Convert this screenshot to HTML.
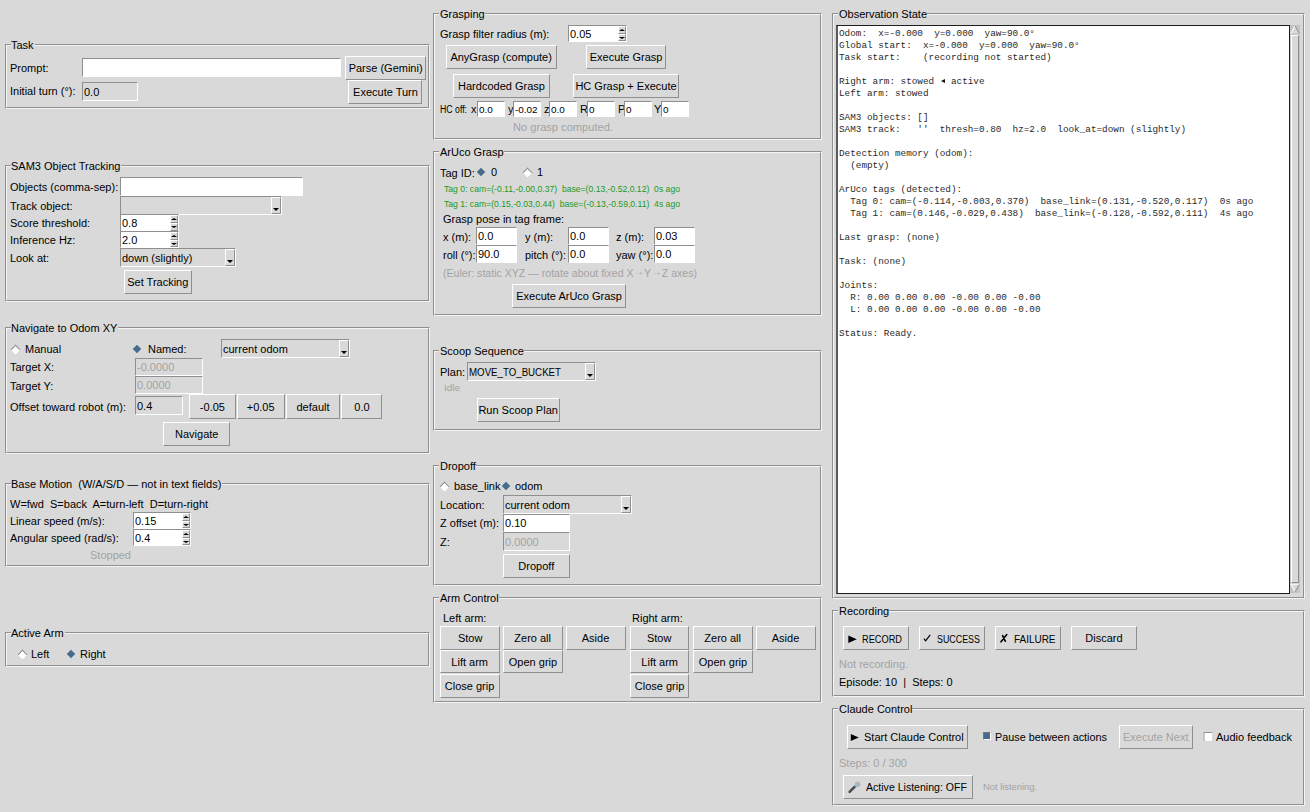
<!DOCTYPE html><html><head><meta charset="utf-8"><style>
*{margin:0;padding:0;box-sizing:content-box}
html,body{width:1310px;height:812px;overflow:hidden;background:#d9d9d9}
body{position:relative;font-family:"Liberation Sans",sans-serif;font-size:10px;color:#000}
div{position:absolute}
.t{white-space:pre;line-height:14px;height:14px;font-size:10px;transform-origin:0 0;transform:scaleX(1.1)}
.lf{border:1px solid;border-color:#8f8f8f #f4f4f4 #f4f4f4 #8f8f8f}
.lfi{left:0;top:0;border:1px solid;border-color:#f4f4f4 #8f8f8f #8f8f8f #f4f4f4}
.lft{background:#d9d9d9;height:14px}
.en{border:1px solid;border-color:#8f8f8f #fff #fff #8f8f8f}
.bt{border:1px solid;border-color:#fff #8f8f8f #8f8f8f #fff;background:#d9d9d9}
.bl{width:200px;text-align:center;white-space:pre;line-height:14px;height:14px}
.bl span{display:inline-block;transform-origin:50% 50%}
.sb{border:1px solid;border-color:#fff #8f8f8f #8f8f8f #fff;background:#d9d9d9}
.cb{border:1px solid;border-color:#fff #8f8f8f #8f8f8f #fff;background:#d9d9d9}
.au{width:0;height:0;border-left:3px solid transparent;border-right:3px solid transparent;border-bottom:2px solid #000}
.ad{width:0;height:0;border-left:3px solid transparent;border-right:3px solid transparent;border-top:2px solid #000}
.cad{width:0;height:0;border-left:3px solid transparent;border-right:3px solid transparent;border-top:3px solid #000}
.ru{width:6px;height:6px;background:#fff;transform:rotate(45deg);border-top:1px solid #888;border-left:1px solid #888}
.rs{width:6px;height:6px;background:#476b8b;transform:rotate(45deg)}
.g{color:#a3a3a3}
.sm{font-size:9px}
.grn{color:#229922;font-size:9.5px}
.mono{font-family:"Liberation Mono",monospace;font-size:9.33px;line-height:12px;white-space:pre;color:#2a2a2a}
.tri{display:inline-block;width:0;height:0;border-top:2px solid transparent;border-bottom:2px solid transparent;border-right:4px solid #111;margin:0 0.8px 0 0.8px;vertical-align:1px}
.arr{position:relative;top:-2px}
</style></head><body><div class="lf" style="left:5px;top:44px;width:423px;height:63px"><div class="lfi" style="width:421px;height:61px"></div></div>
<div class="lft" style="left:11px;top:37px;width:23.6px"></div>
<div class="t" style="left:11px;top:38.5px;transform:scaleX(1.1)">Task</div>
<div class="t " style="left:10px;top:62px;">Prompt:</div>
<div class="en" style="left:82px;top:58px;width:257px;height:17px;background:#fff"></div>
<div class="bt" style="left:345px;top:56px;width:79px;height:22px"></div>
<div class="bl " style="left:285.5px;top:62.0px;color:#000"><span style="transform:scaleX(1.1)">Parse (Gemini)</span></div>
<div class="t " style="left:10px;top:85px;">Initial turn (°):</div>
<div class="en" style="left:82px;top:82px;width:54px;height:17px;background:#d9d9d9"></div>
<div class="t " style="left:84px;top:85.5px;color:#000">0.0</div>
<div class="bt" style="left:348px;top:80px;width:72px;height:22px"></div>
<div class="bl " style="left:285.0px;top:86.0px;color:#000"><span style="transform:scaleX(1.1)">Execute Turn</span></div>
<div class="lf" style="left:5px;top:165px;width:423px;height:135px"><div class="lfi" style="width:421px;height:133px"></div></div>
<div class="lft" style="left:11px;top:158px;width:110.4px"></div>
<div class="t" style="left:11px;top:159.5px;transform:scaleX(1.1)">SAM3 Object Tracking</div>
<div class="t " style="left:10px;top:181px;">Objects (comma-sep):</div>
<div class="en" style="left:120px;top:177px;width:181px;height:17px;background:#fff"></div>
<div class="t " style="left:10px;top:200px;">Track object:</div>
<div class="en" style="left:120px;top:196px;width:160px;height:17px;background:#d9d9d9"></div>
<div class="cb" style="left:271px;top:197px;width:8px;height:15px"></div>
<div class="cad" style="left:273px;top:208px"></div>
<div class="t " style="left:10px;top:217px;">Score threshold:</div>
<div class="en" style="left:120px;top:214px;width:57px;height:16px;background:#fff"></div>
<div class="t " style="left:122px;top:217.0px;color:#000">0.8</div>
<div class="sb" style="left:170px;top:215px;width:6px;height:6px"></div>
<div class="sb" style="left:170px;top:223px;width:6px;height:6px"></div>
<div class="au" style="left:171px;top:218px"></div>
<div class="ad" style="left:171px;top:226px"></div>
<div class="t " style="left:10px;top:234px;">Inference Hz:</div>
<div class="en" style="left:120px;top:231px;width:57px;height:15px;background:#fff"></div>
<div class="t " style="left:122px;top:233.5px;color:#000">2.0</div>
<div class="sb" style="left:170px;top:232px;width:6px;height:6px"></div>
<div class="sb" style="left:170px;top:240px;width:6px;height:5px"></div>
<div class="au" style="left:171px;top:235px"></div>
<div class="ad" style="left:171px;top:243px"></div>
<div class="t " style="left:10px;top:252px;">Look at:</div>
<div class="en" style="left:120px;top:248px;width:114px;height:17px;background:#d9d9d9"></div>
<div class="t" style="left:122px;top:251.5px;transform:scaleX(1.1)">down (slightly)</div>
<div class="cb" style="left:225px;top:249px;width:8px;height:15px"></div>
<div class="cad" style="left:227px;top:260px"></div>
<div class="bt" style="left:124px;top:270px;width:66px;height:22px"></div>
<div class="bl " style="left:58.0px;top:276.0px;color:#000"><span style="transform:scaleX(1.1)">Set Tracking</span></div>
<div class="lf" style="left:5px;top:327px;width:423px;height:125px"><div class="lfi" style="width:421px;height:123px"></div></div>
<div class="lft" style="left:11px;top:320px;width:107.4px"></div>
<div class="t" style="left:11px;top:321.5px;transform:scaleX(1.1)">Navigate to Odom XY</div>
<div class="ru" style="left:12px;top:346px"></div>
<div class="t " style="left:25px;top:343px;">Manual</div>
<div class="rs" style="left:134px;top:346px"></div>
<div class="t " style="left:148px;top:343px;">Named:</div>
<div class="en" style="left:221px;top:339px;width:127px;height:17px;background:#d9d9d9"></div>
<div class="t" style="left:223px;top:342.5px;transform:scaleX(1.1)">current odom</div>
<div class="cb" style="left:339px;top:340px;width:8px;height:15px"></div>
<div class="cad" style="left:341px;top:351px"></div>
<div class="t " style="left:10px;top:361px;">Target X:</div>
<div class="en" style="left:135px;top:358px;width:66px;height:16px;background:#d9d9d9"></div>
<div class="t " style="left:137px;top:361.0px;color:#a3a3a3">-0.0000</div>
<div class="t " style="left:10px;top:380px;">Target Y:</div>
<div class="en" style="left:135px;top:376px;width:66px;height:16px;background:#d9d9d9"></div>
<div class="t " style="left:137px;top:379.0px;color:#a3a3a3">0.0000</div>
<div class="t " style="left:10px;top:401px;">Offset toward robot (m):</div>
<div class="en" style="left:135px;top:396px;width:46px;height:17px;background:#d9d9d9"></div>
<div class="t " style="left:137px;top:399.5px;color:#000">0.4</div>
<div class="bt" style="left:189px;top:394px;width:45px;height:23px"></div>
<div class="bl " style="left:112.5px;top:400.5px;color:#000"><span style="transform:scaleX(1.1)">-0.05</span></div>
<div class="bt" style="left:237px;top:394px;width:46px;height:23px"></div>
<div class="bl " style="left:161.0px;top:400.5px;color:#000"><span style="transform:scaleX(1.1)">+0.05</span></div>
<div class="bt" style="left:286px;top:394px;width:52px;height:23px"></div>
<div class="bl " style="left:213.0px;top:400.5px;color:#000"><span style="transform:scaleX(1.1)">default</span></div>
<div class="bt" style="left:341px;top:394px;width:39px;height:23px"></div>
<div class="bl " style="left:261.5px;top:400.5px;color:#000"><span style="transform:scaleX(1.1)">0.0</span></div>
<div class="bt" style="left:163px;top:422px;width:65px;height:22px"></div>
<div class="bl " style="left:96.5px;top:428.0px;color:#000"><span style="transform:scaleX(1.1)">Navigate</span></div>
<div class="lf" style="left:5px;top:483px;width:423px;height:82px"><div class="lfi" style="width:421px;height:80px"></div></div>
<div class="lft" style="left:11px;top:476px;width:211.3px"></div>
<div class="t" style="left:11px;top:477.5px;transform:scaleX(1.1)">Base Motion  (W/A/S/D — not in text fields)</div>
<div class="t " style="left:10px;top:498px;">W=fwd  S=back  A=turn-left  D=turn-right</div>
<div class="t " style="left:10px;top:515px;">Linear speed (m/s):</div>
<div class="en" style="left:133px;top:512px;width:56px;height:15px;background:#fff"></div>
<div class="t " style="left:135px;top:514.5px;color:#000">0.15</div>
<div class="sb" style="left:182px;top:513px;width:6px;height:6px"></div>
<div class="sb" style="left:182px;top:521px;width:6px;height:5px"></div>
<div class="au" style="left:183px;top:516px"></div>
<div class="ad" style="left:183px;top:524px"></div>
<div class="t " style="left:10px;top:532px;">Angular speed (rad/s):</div>
<div class="en" style="left:133px;top:529px;width:56px;height:15px;background:#fff"></div>
<div class="t " style="left:135px;top:531.5px;color:#000">0.4</div>
<div class="sb" style="left:182px;top:530px;width:6px;height:6px"></div>
<div class="sb" style="left:182px;top:538px;width:6px;height:5px"></div>
<div class="au" style="left:183px;top:533px"></div>
<div class="ad" style="left:183px;top:541px"></div>
<div class="t g" style="left:90px;top:549px;">Stopped</div>
<div class="lf" style="left:5px;top:632px;width:423px;height:33px"><div class="lfi" style="width:421px;height:31px"></div></div>
<div class="lft" style="left:11px;top:625px;width:53.6px"></div>
<div class="t" style="left:11px;top:626.5px;transform:scaleX(1.1)">Active Arm</div>
<div class="ru" style="left:19px;top:651px"></div>
<div class="t " style="left:31px;top:648px;">Left</div>
<div class="rs" style="left:68px;top:651px"></div>
<div class="t " style="left:80px;top:648px;">Right</div>
<div class="lf" style="left:433px;top:13px;width:387px;height:125px"><div class="lfi" style="width:385px;height:123px"></div></div>
<div class="lft" style="left:439px;top:6px;width:45.6px"></div>
<div class="t" style="left:439.5px;top:7.5px;transform:scaleX(1.1)">Grasping</div>
<div class="t " style="left:440px;top:28px;">Grasp filter radius (m):</div>
<div class="en" style="left:568px;top:25px;width:57px;height:15px;background:#fff"></div>
<div class="t " style="left:570px;top:27.5px;color:#000">0.05</div>
<div class="sb" style="left:618px;top:26px;width:6px;height:6px"></div>
<div class="sb" style="left:618px;top:34px;width:6px;height:5px"></div>
<div class="au" style="left:619px;top:29px"></div>
<div class="ad" style="left:619px;top:37px"></div>
<div class="bt" style="left:446px;top:45px;width:109px;height:22px"></div>
<div class="bl " style="left:401.5px;top:51.0px;color:#000"><span style="transform:scaleX(1.1)">AnyGrasp (compute)</span></div>
<div class="bt" style="left:586px;top:45px;width:78px;height:22px"></div>
<div class="bl " style="left:526.0px;top:51.0px;color:#000"><span style="transform:scaleX(1.1)">Execute Grasp</span></div>
<div class="bt" style="left:453px;top:74px;width:95px;height:22px"></div>
<div class="bl " style="left:401.5px;top:80.0px;color:#000"><span style="transform:scaleX(1.1)">Hardcoded Grasp</span></div>
<div class="bt" style="left:573px;top:74px;width:104px;height:22px"></div>
<div class="bl " style="left:526.0px;top:80.0px;color:#000"><span style="transform:scaleX(1.1)">HC Grasp + Execute</span></div>
<div class="t " style="left:440px;top:102.5px;transform:scaleX(0.873);">HC off:</div>
<div class="t " style="left:471px;top:103px;">x</div>
<div class="en" style="left:477px;top:101px;width:26px;height:14px;background:#fff"></div>
<div class="t sm" style="left:479px;top:103.0px;color:#000">0.0</div>
<div class="t " style="left:508px;top:103px;">y</div>
<div class="en" style="left:513px;top:101px;width:26px;height:14px;background:#fff"></div>
<div class="t sm" style="left:515px;top:103.0px;color:#000">-0.02</div>
<div class="t " style="left:544px;top:103px;">z</div>
<div class="en" style="left:549px;top:101px;width:26px;height:14px;background:#fff"></div>
<div class="t sm" style="left:551px;top:103.0px;color:#000">0.0</div>
<div class="t " style="left:580px;top:103px;">R</div>
<div class="en" style="left:587px;top:101px;width:26px;height:14px;background:#fff"></div>
<div class="t sm" style="left:589px;top:103.0px;color:#000">0</div>
<div class="t " style="left:618px;top:103px;">P</div>
<div class="en" style="left:624px;top:101px;width:26px;height:14px;background:#fff"></div>
<div class="t sm" style="left:626px;top:103.0px;color:#000">0</div>
<div class="t " style="left:654px;top:103px;">Y</div>
<div class="en" style="left:661px;top:101px;width:26px;height:14px;background:#fff"></div>
<div class="t sm" style="left:663px;top:103.0px;color:#000">0</div>
<div class="t g" style="left:513px;top:121px;transform:scaleX(1.110);">No grasp computed.</div>
<div class="lf" style="left:433px;top:151px;width:387px;height:163px"><div class="lfi" style="width:385px;height:161px"></div></div>
<div class="lft" style="left:439px;top:144px;width:64.6px"></div>
<div class="t" style="left:439.5px;top:145.5px;transform:scaleX(1.1)">ArUco Grasp</div>
<div class="t " style="left:440px;top:167px;">Tag ID:</div>
<div class="rs" style="left:478px;top:169px"></div>
<div class="t " style="left:491px;top:166px;">0</div>
<div class="ru" style="left:524px;top:169px"></div>
<div class="t " style="left:537px;top:166px;">1</div>
<div class="t grn" style="left:444px;top:182px;transform:scaleX(0.907);">Tag 0: cam=(-0.11,-0.00,0.37)  base=(0.13,-0.52,0.12)  0s ago</div>
<div class="t grn" style="left:444px;top:197px;transform:scaleX(0.907);">Tag 1: cam=(0.15,-0.03,0.44)  base=(-0.13,-0.59,0.11)  4s ago</div>
<div class="t " style="left:443px;top:213px;">Grasp pose in tag frame:</div>
<div class="t " style="left:443px;top:231px;">x (m):</div>
<div class="en" style="left:476px;top:227px;width:39px;height:16px;background:#fff"></div>
<div class="t " style="left:478px;top:230.0px;color:#000">0.0</div>
<div class="t " style="left:525px;top:231px;">y (m):</div>
<div class="en" style="left:568px;top:227px;width:39px;height:16px;background:#fff"></div>
<div class="t " style="left:570px;top:230.0px;color:#000">0.0</div>
<div class="t " style="left:616px;top:231px;">z (m):</div>
<div class="en" style="left:654px;top:227px;width:39px;height:16px;background:#fff"></div>
<div class="t " style="left:656px;top:230.0px;color:#000">0.03</div>
<div class="t " style="left:443px;top:249px;">roll (°):</div>
<div class="en" style="left:476px;top:245px;width:39px;height:16px;background:#fff"></div>
<div class="t " style="left:478px;top:248.0px;color:#000">90.0</div>
<div class="t " style="left:525px;top:249px;">pitch (°):</div>
<div class="en" style="left:568px;top:245px;width:39px;height:16px;background:#fff"></div>
<div class="t " style="left:570px;top:248.0px;color:#000">0.0</div>
<div class="t " style="left:616px;top:249px;">yaw (°):</div>
<div class="en" style="left:654px;top:245px;width:39px;height:16px;background:#fff"></div>
<div class="t " style="left:656px;top:248.0px;color:#000">0.0</div>
<div class="t g" style="left:443px;top:267px;transform:scaleX(1.058);">(Euler: static XYZ — rotate about fixed X<span class="arr">→</span>Y<span class="arr">→</span>Z axes)</div>
<div class="bt" style="left:512px;top:284px;width:112px;height:22px"></div>
<div class="bl " style="left:469.0px;top:290.0px;color:#000"><span style="transform:scaleX(1.1)">Execute ArUco Grasp</span></div>
<div class="lf" style="left:433px;top:350px;width:387px;height:79px"><div class="lfi" style="width:385px;height:77px"></div></div>
<div class="lft" style="left:439px;top:343px;width:84.8px"></div>
<div class="t" style="left:439.5px;top:344.5px;transform:scaleX(1.1)">Scoop Sequence</div>
<div class="t " style="left:440px;top:366px;">Plan:</div>
<div class="en" style="left:467px;top:362px;width:127px;height:17px;background:#d9d9d9"></div>
<div class="t" style="left:469px;top:365.5px;transform:scaleX(0.97)">MOVE_TO_BUCKET</div>
<div class="cb" style="left:585px;top:363px;width:8px;height:15px"></div>
<div class="cad" style="left:587px;top:374px"></div>
<div class="t g sm" style="left:444px;top:381px;">Idle</div>
<div class="bt" style="left:477px;top:398px;width:81px;height:22px"></div>
<div class="bl " style="left:418.5px;top:404.0px;color:#000"><span style="transform:scaleX(1.1)">Run Scoop Plan</span></div>
<div class="lf" style="left:433px;top:465px;width:387px;height:119px"><div class="lfi" style="width:385px;height:117px"></div></div>
<div class="lft" style="left:439px;top:458px;width:36.9px"></div>
<div class="t" style="left:439.5px;top:459.5px;transform:scaleX(1.1)">Dropoff</div>
<div class="ru" style="left:441px;top:483px"></div>
<div class="t " style="left:454px;top:480px;">base_link</div>
<div class="rs" style="left:503px;top:483px"></div>
<div class="t " style="left:515px;top:480px;">odom</div>
<div class="t " style="left:440px;top:499px;">Location:</div>
<div class="en" style="left:503px;top:495px;width:127px;height:17px;background:#d9d9d9"></div>
<div class="t" style="left:505px;top:498.5px;transform:scaleX(1.1)">current odom</div>
<div class="cb" style="left:621px;top:496px;width:8px;height:15px"></div>
<div class="cad" style="left:623px;top:507px"></div>
<div class="t " style="left:440px;top:517px;">Z offset (m):</div>
<div class="en" style="left:503px;top:514px;width:65px;height:16px;background:#fff"></div>
<div class="t " style="left:505px;top:517.0px;color:#000">0.10</div>
<div class="t " style="left:440px;top:536px;">Z:</div>
<div class="en" style="left:503px;top:532px;width:65px;height:17px;background:#d9d9d9"></div>
<div class="t " style="left:505px;top:535.5px;color:#a3a3a3">0.0000</div>
<div class="bt" style="left:503px;top:554px;width:65px;height:22px"></div>
<div class="bl " style="left:436.5px;top:560.0px;color:#000"><span style="transform:scaleX(1.1)">Dropoff</span></div>
<div class="lf" style="left:433px;top:597px;width:387px;height:104px"><div class="lfi" style="width:385px;height:102px"></div></div>
<div class="lft" style="left:439px;top:590px;width:59.7px"></div>
<div class="t" style="left:439.5px;top:591.5px;transform:scaleX(1.1)">Arm Control</div>
<div class="t " style="left:443px;top:612px;">Left arm:</div>
<div class="t " style="left:632px;top:612px;">Right arm:</div>
<div class="bt" style="left:440px;top:626px;width:58px;height:22px"></div>
<div class="bl " style="left:370.0px;top:632.0px;color:#000"><span style="transform:scaleX(1.1)">Stow</span></div>
<div class="bt" style="left:503px;top:626px;width:58px;height:22px"></div>
<div class="bl " style="left:433.0px;top:632.0px;color:#000"><span style="transform:scaleX(1.1)">Zero all</span></div>
<div class="bt" style="left:566px;top:626px;width:58px;height:22px"></div>
<div class="bl " style="left:496.0px;top:632.0px;color:#000"><span style="transform:scaleX(1.1)">Aside</span></div>
<div class="bt" style="left:440px;top:650px;width:58px;height:21px"></div>
<div class="bl " style="left:370.0px;top:655.5px;color:#000"><span style="transform:scaleX(1.1)">Lift arm</span></div>
<div class="bt" style="left:503px;top:650px;width:58px;height:21px"></div>
<div class="bl " style="left:433.0px;top:655.5px;color:#000"><span style="transform:scaleX(1.1)">Open grip</span></div>
<div class="bt" style="left:440px;top:674px;width:58px;height:22px"></div>
<div class="bl " style="left:370.0px;top:680.0px;color:#000"><span style="transform:scaleX(1.1)">Close grip</span></div>
<div class="bt" style="left:630px;top:626px;width:57px;height:22px"></div>
<div class="bl " style="left:559.5px;top:632.0px;color:#000"><span style="transform:scaleX(1.1)">Stow</span></div>
<div class="bt" style="left:693px;top:626px;width:58px;height:22px"></div>
<div class="bl " style="left:623.0px;top:632.0px;color:#000"><span style="transform:scaleX(1.1)">Zero all</span></div>
<div class="bt" style="left:756px;top:626px;width:58px;height:22px"></div>
<div class="bl " style="left:686.0px;top:632.0px;color:#000"><span style="transform:scaleX(1.1)">Aside</span></div>
<div class="bt" style="left:630px;top:650px;width:57px;height:21px"></div>
<div class="bl " style="left:559.5px;top:655.5px;color:#000"><span style="transform:scaleX(1.1)">Lift arm</span></div>
<div class="bt" style="left:693px;top:650px;width:58px;height:21px"></div>
<div class="bl " style="left:623.0px;top:655.5px;color:#000"><span style="transform:scaleX(1.1)">Open grip</span></div>
<div class="bt" style="left:630px;top:674px;width:57px;height:22px"></div>
<div class="bl " style="left:559.5px;top:680.0px;color:#000"><span style="transform:scaleX(1.1)">Close grip</span></div>
<div class="lf" style="left:832px;top:13px;width:471px;height:584px"><div class="lfi" style="width:469px;height:582px"></div></div>
<div class="lft" style="left:838px;top:6px;width:89.1px"></div>
<div class="t" style="left:838.5px;top:7.5px;transform:scaleX(1.1)">Observation State</div>
<div style="left:836px;top:25px;width:452px;height:567px;background:#fff;border:1px solid #1e1e1e;border-left-color:#5a5a5a"></div>
<div style="left:837px;top:26px;width:1px;height:567px;background:#5a5a5a"></div>
<div class="mono" style="left:839px;top:28px">Odom:  x=-0.000  y=0.000  yaw=90.0°
Global start:  x=-0.000  y=0.000  yaw=90.0°
Task start:    (recording not started)

Right arm: stowed <span class="tri"></span> active
Left arm: stowed

SAM3 objects: []
SAM3 track:   &#x27;&#x27;  thresh=0.80  hz=2.0  look_at=down (slightly)

Detection memory (odom):
  (empty)

ArUco tags (detected):
  Tag 0: cam=(-0.114,-0.003,0.370)  base_link=(0.131,-0.520,0.117)  0s ago
  Tag 1: cam=(0.146,-0.029,0.438)  base_link=(-0.128,-0.592,0.111)  4s ago

Last grasp: (none)

Task: (none)

Joints:
  R: 0.00 0.00 0.00 -0.00 0.00 -0.00
  L: 0.00 0.00 0.00 -0.00 0.00 -0.00

Status: Ready.</div>
<div style="left:1290px;top:25px;width:10px;height:568px;background:#c4c4c4"></div>
<div class="bt" style="left:1291px;top:35px;width:6px;height:546px"></div>
<svg style="position:absolute;left:1290px;top:25px" width="10" height="10"><path d="M0.8 8.5 L5 0.8 L9.2 8.5 Z" fill="#d9d9d9"/><path d="M0.8 8.5 L5 0.8" stroke="#fff" fill="none"/><path d="M5 0.8 L9.2 8.5" stroke="#8f8f8f" fill="none"/></svg>
<svg style="position:absolute;left:1290px;top:583px" width="10" height="10"><path d="M0.8 1.2 L5 9 L9.2 1.2 Z" fill="#d9d9d9"/><path d="M0.8 1.2 L5 9" stroke="#fff" fill="none"/><path d="M5 9 L9.2 1.2" stroke="#8f8f8f" fill="none"/><path d="M0.8 1.2 L9.2 1.2" stroke="#fff" fill="none"/></svg>
<div class="lf" style="left:832px;top:610px;width:471px;height:85px"><div class="lfi" style="width:469px;height:83px"></div></div>
<div class="lft" style="left:838px;top:603px;width:51.1px"></div>
<div class="t" style="left:838.5px;top:604.5px;transform:scaleX(1.1)">Recording</div>
<div class="bt" style="left:843px;top:626px;width:64px;height:22px"></div>
<div class="bl " style="left:776.0px;top:632.0px;color:#000"><span style="transform:scaleX(1.1)"></span></div>
<svg style="position:absolute;left:848px;top:635px;overflow:visible" width="10" height="9" viewBox="0 0 10 9"><path d="M0.3 0.6 L8.8 4.3 L0.3 8.0 Z" fill="#000"/></svg>
<div class="t " style="left:862px;top:632.5px;transform:scaleX(0.923);">RECORD</div>
<div class="bt" style="left:919px;top:626px;width:64px;height:22px"></div>
<div class="bl " style="left:852.0px;top:632.0px;color:#000"><span style="transform:scaleX(1.1)"></span></div>
<svg style="position:absolute;left:923px;top:634px;overflow:visible" width="8" height="8" viewBox="0 0 8 8"><path d="M1.2 5.0 L2.6 6.8 L7.0 1.2" stroke="#000" stroke-width="1.2" fill="none" stroke-linecap="round" stroke-linejoin="round"/></svg>
<div class="t " style="left:937px;top:632.5px;transform:scaleX(0.889);">SUCCESS</div>
<div class="bt" style="left:995px;top:626px;width:64px;height:22px"></div>
<div class="bl " style="left:928.0px;top:632.0px;color:#000"><span style="transform:scaleX(1.1)"></span></div>
<svg style="position:absolute;left:1000px;top:634px;overflow:visible" width="8" height="9" viewBox="0 0 8 9"><path d="M1.0 7.8 L6.8 0.6 M2.6 1.6 Q3.6 4.5 5.4 7.2" stroke="#000" stroke-width="1.6" fill="none" stroke-linecap="round"/></svg>
<div class="t " style="left:1014px;top:632.5px;transform:scaleX(0.996);">FAILURE</div>
<div class="bt" style="left:1071px;top:626px;width:64px;height:22px"></div>
<div class="bl " style="left:1004.0px;top:632.0px;color:#000"><span style="transform:scaleX(1.1)">Discard</span></div>
<div class="t g" style="left:839px;top:658px;">Not recording.</div>
<div class="t " style="left:839px;top:676px;">Episode: 10  |  Steps: 0</div>
<div class="lf" style="left:832px;top:708px;width:471px;height:96px"><div class="lfi" style="width:469px;height:94px"></div></div>
<div class="lft" style="left:838px;top:701px;width:74.4px"></div>
<div class="t" style="left:838.5px;top:702.5px;transform:scaleX(1.1)">Claude Control</div>
<div class="bt" style="left:847px;top:725px;width:119px;height:22px"></div>
<div class="bl " style="left:807.5px;top:731.0px;color:#000"><span style="transform:scaleX(1.1)"></span></div>
<svg style="position:absolute;left:850px;top:733px;overflow:visible" width="9" height="9" viewBox="0 0 9 9"><path d="M0.8 0.9 L8.8 4.5 L0.8 8.1 Z" fill="#000"/></svg>
<div class="t " style="left:864px;top:731px;">Start Claude Control</div>
<div style="left:983px;top:732px;width:7px;height:7px;background:#476b8b;border-top:1px solid #777;border-left:1px solid #777;border-right:1px solid #fff;border-bottom:1px solid #fff;box-sizing:border-box;width:8px;height:8px"></div>
<div class="t " style="left:995px;top:731px;transform:scaleX(1.083);">Pause between actions</div>
<div class="bt" style="left:1119px;top:725px;width:72px;height:22px"></div>
<div class="bl " style="left:1056.0px;top:731.0px;color:#a3a3a3"><span style="transform:scaleX(1.1)">Execute Next</span></div>
<div style="left:1203px;top:732px;box-sizing:border-box;width:9px;height:9px;background:#fff;border-top:1px solid #8f8f8f;border-left:2px solid #c4c4c4"></div>
<div class="t " style="left:1216px;top:731px;transform:scaleX(1.102);">Audio feedback</div>
<div class="t g" style="left:839px;top:757px;">Steps: 0 / 300</div>
<div class="bt" style="left:843px;top:775px;width:128px;height:22px"></div>
<div class="bl " style="left:808.0px;top:781.0px;color:#000"><span style="transform:scaleX(1.1)"></span></div>
<svg style="position:absolute;left:847px;top:780px;overflow:visible" width="15" height="15" viewBox="0 0 15 15"><path d="M2.6 11.8 L7.6 6.8" stroke="#4d4d4d" stroke-width="2.6" stroke-linecap="round"/><circle cx="10.6" cy="4.3" r="2.7" fill="#b4b4b4"/><path d="M7.9 5.0 L9.9 7.0" stroke="#8cc4dc" stroke-width="1.3" fill="none"/><path d="M8.9 2.6 L12.3 6.0" stroke="#8cc4dc" stroke-width="1" fill="none"/></svg>
<div class="t " style="left:866px;top:781px;transform:scaleX(1.056);">Active Listening: OFF</div>
<div class="t g sm" style="left:983px;top:780px;transform:scaleX(1.038);">Not listening.</div></body></html>
